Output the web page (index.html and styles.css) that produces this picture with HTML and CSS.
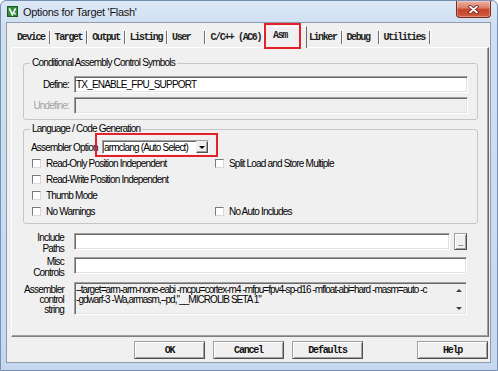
FILE: index.html
```html
<!DOCTYPE html>
<html>
<head>
<meta charset="utf-8">
<title>Options for Target 'Flash'</title>
<link rel="stylesheet" href="styles.css">
</head>
<body>
<div class="window">
  <div class="titlebar">
    <svg class="app-icon" viewBox="0 0 11 11" width="11" height="11">
      <rect x="0.5" y="0.5" width="10" height="10" fill="#2f8f3c" stroke="#1d5a26"/>
      <path d="M2.3 2.3 L5.3 8.6 L8.6 2.3" fill="none" stroke="#fff" stroke-width="1.6"/>
      <rect x="7.2" y="6.8" width="1.6" height="1.6" fill="#fff"/>
    </svg>
    <span class="title">Options for Target 'Flash'</span>
    <div class="close">
      <svg viewBox="0 0 11 9" width="11" height="9">
        <path d="M2 1.5 L9 7.5 M9 1.5 L2 7.5" stroke="#5a1a10" stroke-width="3.4" stroke-linecap="round"/>
        <path d="M2 1.5 L9 7.5 M9 1.5 L2 7.5" stroke="#fff" stroke-width="1.8" stroke-linecap="round"/>
      </svg>
    </div>
  </div>
  <div class="client">
    <div class="tabs">
      <span class="tab">Device</span>
      <span class="tab">Target</span>
      <span class="tab">Output</span>
      <span class="tab">Listing</span>
      <span class="tab tab-user">User</span>
      <span class="tab tab-cc">C/C++ (AC6)</span>
      <span class="tab tab-active">Asm<span class="mark mark-tab"></span></span>
      <span class="tab tab-linker">Linker</span>
      <span class="tab tab-debug">Debug</span>
      <span class="tab">Utilities</span>
    </div>
    <div class="panel">
      <fieldset class="group group-cond">
        <legend>Conditional Assembly Control Symbols</legend>
        <div class="row">
          <span class="lbl">Define:</span>
          <div class="field">TX_ENABLE_FPU_SUPPORT</div>
        </div>
        <div class="row">
          <span class="lbl lbl-disabled">Undefine:</span>
          <div class="field field-disabled"></div>
        </div>
      </fieldset>
      <fieldset class="group group-lang">
        <legend>Language / Code Generation</legend>
        <div class="opt-row">
          <span class="opt-label">Assembler Option</span>
          <div class="combo">
            <span class="combo-text">armclang (Auto Select)</span>
            <span class="combo-btn"><span class="tri-down"></span></span>
            <span class="mark mark-combo"></span>
          </div>
        </div>
        <div class="checks">
          <span class="check"><span class="box"></span>Read-Only Position Independent</span>
          <span class="check"><span class="box"></span>Split Load and Store Multiple</span>
          <span class="check"><span class="box"></span>Read-Write Position Independent</span>
          <span></span>
          <span class="check"><span class="box"></span>Thumb Mode</span>
          <span></span>
          <span class="check"><span class="box"></span>No Warnings</span>
          <span class="check"><span class="box"></span>No Auto Includes</span>
        </div>
      </fieldset>
      <div class="frow frow-include">
        <span class="flbl">Include<br>Paths</span>
        <div class="field"></div>
        <span class="browse">...</span>
      </div>
      <div class="frow frow-misc">
        <span class="flbl">Misc<br>Controls</span>
        <div class="field"></div>
      </div>
      <div class="frow frow-asm">
        <span class="flbl flbl-asm">Assembler<br>control<br>string</span>
        <div class="area">
          <div class="area-text">--target=arm-arm-none-eabi -mcpu=cortex-m4 -mfpu=fpv4-sp-d16 -mfloat-abi=hard -masm=auto -c
-gdwarf-3 -Wa,armasm,--pd,"__MICROLIB SETA 1"</div>
          <div class="scroll"><span class="tri-up"></span><span class="tri-down tri-small"></span></div>
        </div>
      </div>
    </div>
    <div class="buttons">
      <span class="btn">OK</span>
      <span class="btn">Cancel</span>
      <span class="btn">Defaults</span>
      <span class="btn btn-help">Help</span>
    </div>
  </div>
</div>
</body>
</html>
```
FILE: styles.css
```css
* { box-sizing: border-box; }
html, body { margin: 0; padding: 0; }
body {
  width: 498px;
  height: 371px;
  overflow: hidden;
  background: #fff;
  font-family: "Liberation Sans", Arial, sans-serif;
  font-size: 10px;
  letter-spacing: -0.8px;
  color: #000;
}
.window {
  width: 498px;
  height: 371px;
  border: 1px solid #7790b3;
  border-radius: 6px 6px 0 0;
  background: linear-gradient(180deg, #dde8f5 0, #d0e0f2 22px, #c5d8ef 100%);
  display: flex;
  flex-direction: column;
}
.titlebar {
  height: 21px;
  flex: none;
  display: flex;
  align-items: center;
  padding-left: 6px;
}
.app-icon { flex: none; display: block; }
.title {
  margin-left: 5px;
  font-size: 11px;
  letter-spacing: -0.3px;
  color: #151515;
}
.close {
  margin-left: auto;
  margin-right: 6px;
  align-self: flex-start;
  width: 35px;
  height: 17px;
  border: 1px solid #7d2a1d;
  border-top: none;
  border-radius: 0 0 4px 4px;
  background: linear-gradient(180deg, #ebb3a5 0, #dd836d 40%, #c7432a 55%, #d05b3e 100%);
  box-shadow: inset 0 0 0 1px rgba(255,255,255,0.3);
  display: flex;
  align-items: center;
  justify-content: center;
}
.close svg { display: block; }
.client {
  flex: 1;
  margin: 0 6px 7px 5px;
  border: 1px solid #8e9cb0;
  background: #f0f0f0;
  padding: 4px 1px 0 4px;
  display: flex;
  flex-direction: column;
}
.tabs {
  height: 20px;
  flex: none;
  display: flex;
  align-items: flex-end;
  padding-left: 1px;
  font-family: "Liberation Mono", monospace;
  font-weight: bold;
  font-size: 10px;
  letter-spacing: -1.4px;
  color: #222;
}
.tab {
  height: 13px;
  line-height: 13px;
  margin-bottom: 3px;
  padding: 0 4px 0 5px;
  border-right: 1px solid #707070;
  box-shadow: 1px 0 0 #fff;
  white-space: nowrap;
}
.tab-user { padding-right: 14px; }
.tab-cc { border-right: none; box-shadow: none; padding-right: 2px; }
.tab-active {
  position: relative;
  z-index: 2;
  height: 22px;
  line-height: 18px;
  margin-bottom: -1px;
  padding: 0 19px 0 9px;
  background: #f0f0f0;
  border-top: 1px solid #fff;
  border-left: 1px solid #fff;
  border-right: 1px solid #696969;
  box-shadow: none;
}
.tab-linker { padding-left: 2px; }
.tab-debug { padding-right: 8px; }
.mark {
  position: absolute;
  border: 2px solid #e5202a;
  pointer-events: none;
}
.mark-tab { left: 0; top: -4px; width: 37px; height: 26px; }
.mark-combo { left: -8px; top: -8px; width: 123px; height: 24px; }
.panel {
  height: 290px;
  flex: none;
  border-top: 1px solid #fff;
  border-left: 1px solid #fff;
  border-right: 1px solid #696969;
  border-bottom: 1px solid #808080;
  box-shadow: inset -1px -1px 0 #a0a0a0;
  padding: 0 10px 0 11px;
  display: flex;
  flex-direction: column;
}
.group {
  margin: 9px 0 0;
  padding: 7px 9px 5px 6px;
  border: 1px solid #c6c6c6;
  border-radius: 3px;
  min-width: 0;
}
.group legend {
  padding: 0 2px;
  line-height: 12px;
  color: #000;
}
.group-lang {
  margin-top: 3px;
  padding: 5px 9px 4px 6px;
}
.row {
  display: flex;
  align-items: center;
  height: 17px;
}
.row + .row { margin-top: 4px; }
.lbl {
  width: 39px;
  flex: none;
  text-align: right;
  margin-right: 5px;
  white-space: nowrap;
}
.lbl-disabled { color: #a3a3a3; }
.field {
  flex: 1;
  height: 17px;
  background: #fff;
  border: 1px solid;
  border-color: #a0a0a0 #fff #fff #a0a0a0;
  box-shadow: inset 1px 1px 0 #696969, inset -1px -1px 0 #e3e3e3;
  padding: 0 1px;
  line-height: 15px;
  white-space: nowrap;
  overflow: hidden;
}
.field-disabled { background: #f0f0f0; }
.opt-row {
  display: flex;
  align-items: center;
  height: 14px;
}
.opt-label {
  width: 72px;
  flex: none;
  padding-left: 1px;
  white-space: nowrap;
}
.combo {
  position: relative;
  width: 107px;
  height: 14px;
  background: #fff;
  border: 1px solid;
  border-color: #a0a0a0 #fff #fff #a0a0a0;
  box-shadow: inset 1px 1px 0 #696969;
  display: flex;
  align-items: center;
  padding-left: 1px;
}
.combo-text { white-space: nowrap; }
.combo-btn {
  margin-left: auto;
  width: 12px;
  height: 12px;
  border: 1px solid;
  border-color: #f0f0f0 #505050 #505050 #f0f0f0;
  box-shadow: inset -1px -1px 0 #a0a0a0;
  background: #f0f0f0;
  display: flex;
  align-items: center;
  justify-content: center;
}
.tri-down {
  width: 0;
  height: 0;
  border-left: 3px solid transparent;
  border-right: 3px solid transparent;
  border-top: 3px solid #000;
}
.tri-up {
  width: 0;
  height: 0;
  border-left: 3px solid transparent;
  border-right: 3px solid transparent;
  border-bottom: 3px solid #404040;
}
.tri-small { border-top-color: #404040; }
.checks {
  display: grid;
  grid-template-columns: 183px 1fr;
  grid-auto-rows: 16px;
  margin-top: 1px;
}
.check {
  display: flex;
  align-items: center;
  padding-left: 2px;
  white-space: nowrap;
}
.box {
  width: 9px;
  height: 9px;
  flex: none;
  background: #fff;
  border: 1px solid;
  border-color: #7a7a7a #d8d8d8 #d8d8d8 #7a7a7a;
  margin-right: 5px;
}
.frow {
  display: flex;
  align-items: flex-start;
  padding-right: 11px;
}
.frow-include { margin-top: 9px; }
.frow-misc { margin-top: 3px; }
.frow-asm { margin-top: 4px; }
.flbl {
  width: 41px;
  flex: none;
  margin-right: 10px;
  text-align: right;
  line-height: 10.5px;
  white-space: nowrap;
}
.flbl-asm { margin-top: 3px; line-height: 10px; }
.browse {
  width: 13px;
  height: 17px;
  flex: none;
  margin-left: 4px;
  border: 1px solid;
  border-color: #a0a0a0 #505050 #505050 #a0a0a0;
  box-shadow: inset 1px 1px 0 #fff, inset -1px -1px 0 #a0a0a0;
  font-size: 8px;
  letter-spacing: -0.5px;
  line-height: 19px;
  text-align: center;
}
.area {
  flex: 1;
  height: 33px;
  background: #f0f0f0;
  border: 1px solid;
  border-color: #a0a0a0 #fff #fff #a0a0a0;
  box-shadow: inset 1px 1px 0 #696969, inset -1px -1px 0 #e3e3e3;
  display: flex;
  padding: 2px 0 0 1px;
  overflow: hidden;
}
.area-text {
  flex: 1;
  line-height: 10px;
  letter-spacing: -0.95px;
  white-space: pre;
  overflow: hidden;
}
.scroll {
  width: 14px;
  flex: none;
  display: flex;
  flex-direction: column;
  justify-content: space-between;
  align-items: center;
  padding: 4px 0 4px;
}
.buttons {
  display: flex;
  gap: 8px;
  padding: 4px 1px 0 123px;
}
.btn {
  width: 71px;
  height: 18px;
  flex: none;
  border: 1px solid;
  border-color: #a0a0a0 #505050 #505050 #a0a0a0;
  box-shadow: inset 1px 1px 0 #fff, inset -1px -1px 0 #a0a0a0;
  background: #f0f0f0;
  font-family: "Liberation Mono", monospace;
  font-weight: bold;
  font-size: 10px;
  letter-spacing: -1.2px;
  color: #111;
  display: flex;
  align-items: center;
  justify-content: center;
}
.btn-help { margin-left: auto; }
```
